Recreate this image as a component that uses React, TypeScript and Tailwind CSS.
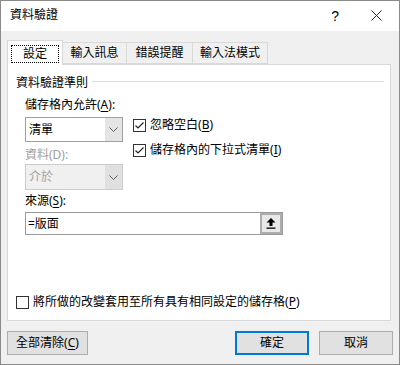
import React from "react"

const font = "font-['Noto_Sans','Noto_Sans_CJK_TC',sans-serif]"

function Chevron() {
  return (
    <svg width="9" height="5" viewBox="0 0 9 5" className="block">
      <polyline points="0.5,0.5 4.5,4.5 8.5,0.5" fill="none" stroke="#606060" strokeWidth="1" />
    </svg>
  )
}

function Check({ checked, label, u }: { checked?: boolean; label: string; u: string }) {
  return (
    <div className="flex items-center h-4">
      <div className="w-[13px] h-[13px] border border-[#333333] bg-white flex items-center justify-center shrink-0">
        {checked && (
          <svg width="11" height="11" viewBox="0 0 11 11" className="block">
            <polyline points="1.5,5.5 4,8 9.5,2.5" fill="none" stroke="#222" strokeWidth="1.2" />
          </svg>
        )}
      </div>
      <span className="ml-[4px] whitespace-nowrap">
        {label}(<span className="underline underline-offset-2">{u}</span>)
      </span>
    </div>
  )
}

export default function App() {
  const tabs = [
    { label: "輸入訊息", w: "w-[64px]" },
    { label: "錯誤提醒", w: "w-[66px]" },
    { label: "輸入法模式", w: "w-[75px]" },
  ]

  return (
    <div className={`${font} w-[400px] h-[365px] border border-[#8a8a8a] flex flex-col text-[12px] leading-4 text-black bg-[#f0f0f0] overflow-hidden`}>
      {/* title bar */}
      <div className="h-[30px] bg-white flex items-center shrink-0">
        <span className="ml-[9px] text-[12px] mb-[2px]">資料驗證</span>
        <span className="ml-auto mr-[32px] text-[14px] font-['Liberation_Sans',sans-serif] mb-[1px]">?</span>
        <svg width="11" height="11" viewBox="0 0 11 11" className="mr-[17px] mb-[1px]">
          <path d="M0.5 0.5 L10.5 10.5 M10.5 0.5 L0.5 10.5" stroke="#222" strokeWidth="1" />
        </svg>
      </div>

      {/* tabs */}
      <div className="flex items-end pl-[6px] pt-[8px] h-[33px] shrink-0">
        <div className="w-[56px] h-[25px] bg-white border border-b-0 border-[#d9d9d9] relative z-10 mb-[-1px] flex pt-[4px] px-[3px]">
          <div className="flex-1 h-[18px] border border-dotted border-black flex items-center justify-center">設定</div>
        </div>
        {tabs.map((t) => (
          <div
            key={t.label}
            className={`${t.w} h-[22px] border border-l-0 border-[#d9d9d9] flex items-center justify-center pb-[1px]`}
          >
            {t.label}
          </div>
        ))}
      </div>

      {/* panel */}
      <div className="mx-[6px] w-[384px] h-[257px] bg-white border border-[#d9d9d9] flex flex-col shrink-0">
        <div className="flex items-center mt-[10px] pl-[8px] pr-[6px]">
          <span>資料驗證準則</span>
          <div className="flex-1 h-px bg-[#dcdcdc] ml-[4px] mb-[3px]" />
        </div>

        <div className="flex items-start pl-[17px] mt-[6px]">
          <div className="flex flex-col w-[98px]">
            <span className="whitespace-nowrap">
              儲存格內允許(<span className="underline underline-offset-2">A</span>):
            </span>
            <div className="mt-[4px] h-[25px] border border-[#a0a0a0] flex">
              <div className="flex-1 flex items-center pl-[3px] bg-white">清單</div>
              <div className="w-[17px] bg-[#e5e5e5] flex items-center justify-center">
                <Chevron />
              </div>
            </div>
            <span className="mt-[5px] text-[#a0a0a0]">資料(D):</span>
            <div className="mt-[1px] h-[26px] border border-[#cccccc] flex bg-[#f0f0f0]">
              <div className="flex-1 flex items-center pl-[3px] text-[#a0a0a0]">介於</div>
              <div className="w-[17px] bg-[#e0e0e0] flex items-center justify-center">
                <Chevron />
              </div>
            </div>
          </div>

          <div className="flex flex-col ml-[10px] mt-[20px] gap-[9px]">
            <Check checked label="忽略空白" u="B" />
            <Check checked label="儲存格內的下拉式清單" u="I" />
          </div>
        </div>

        <div className="pl-[17px] flex flex-col">
          <span className="mt-[3px]">
            來源(<span className="underline underline-offset-2">S</span>):
          </span>
          <div className="mt-[3px] w-[258px] h-[23px] border border-[#9a9a9a] flex bg-white">
            <div className="flex-1 flex items-center pl-[2px]">=版面</div>
            <div className="w-[22px] border-2 border-[#adadad] bg-[#e8e8e8] flex items-center justify-center">
              <svg width="10" height="11" viewBox="0 0 10 11" className="block">
                <path d="M5 0 L9.5 4.5 L6.5 4.5 L6.5 8 L3.5 8 L3.5 4.5 L0.5 4.5 Z" fill="#000" />
                <rect x="0.5" y="9.5" width="9" height="1.3" fill="#000" />
              </svg>
            </div>
          </div>
        </div>

        <div className="flex-1" />
        <div className="pl-[8px] mb-[10px]">
          <Check label="將所做的改變套用至所有具有相同設定的儲存格" u="P" />
        </div>
      </div>

      {/* buttons */}
      <div className="flex items-center px-[6px] mt-[10px]">
        <button className="w-[81px] h-[24px] bg-[#e1e1e1] border border-[#adadad] flex items-center justify-center">
          全部清除(<span className="underline underline-offset-2">C</span>)
        </button>
        <button className="ml-auto w-[74px] h-[24px] bg-[#e1e1e1] border-2 border-[#0078d7] flex items-center justify-center">
          確定
        </button>
        <button className="ml-[10px] w-[74px] h-[24px] bg-[#e1e1e1] border border-[#adadad] flex items-center justify-center">
          取消
        </button>
      </div>
    </div>
  )
}
